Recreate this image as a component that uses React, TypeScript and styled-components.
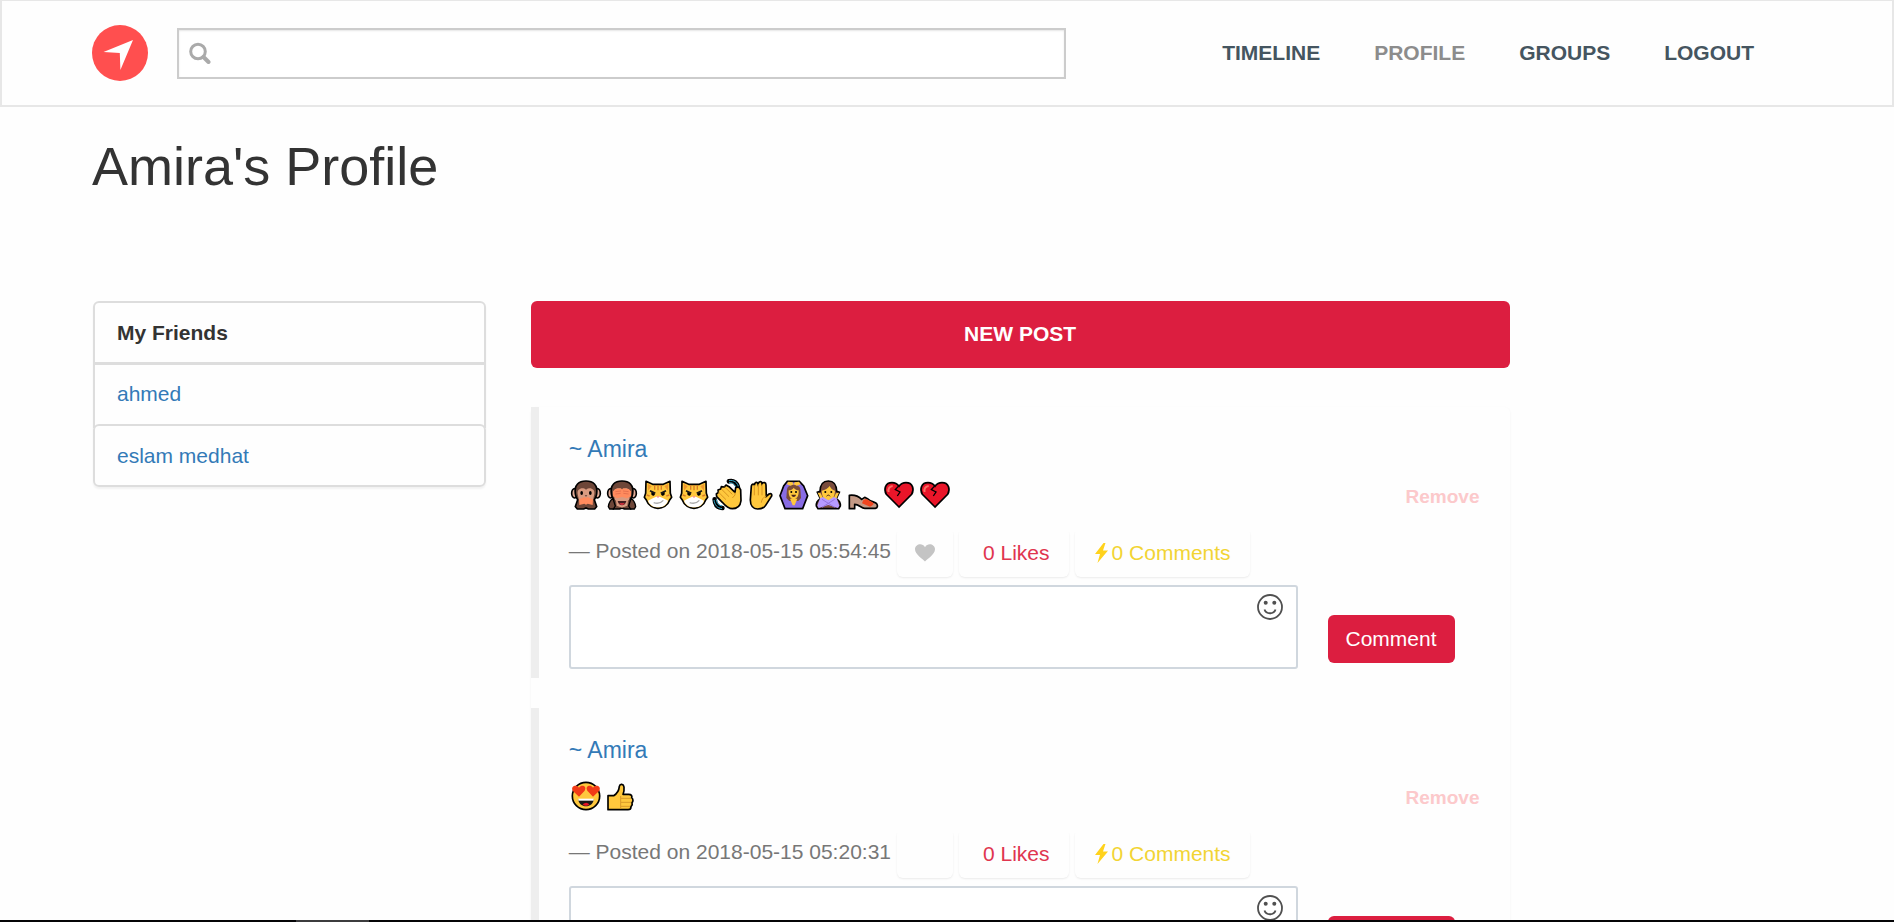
import React from "react";
import styled, { createGlobalStyle } from "styled-components";

const GlobalStyle = createGlobalStyle`
  *, *::before, *::after { box-sizing: border-box; }
  body {
    margin: 0;
    background: #fefefe;
    color: #333;
    font-family: "Liberation Sans", Arial, Helvetica, sans-serif;
    font-size: 21px;
    line-height: 30px;
  }
  a { color: #337ab7; text-decoration: none; }
  button { font: inherit; cursor: pointer; }
`;

const Page = styled.div`
  display: flex;
  flex-direction: column;
  height: 100vh;
`;

const Content = styled.div`
  flex: 1;
  min-height: 0;
  overflow: hidden;
`;

const Container = styled.div`
  max-width: 1710px;
  margin: 0 auto;
`;

const Header = styled.header`
  border: 2px solid #e7e7e7;
  border-top-width: 1px;
  background: #fefefe;
`;

const HeaderInner = styled(Container)`
  display: flex;
  align-items: center;
  height: 104px;
`;

const LogoLink = styled.a`
  display: block;
  height: 56px;
  margin-right: 29px;
`;

const SearchBox = styled.form`
  display: flex;
  align-items: center;
  width: 52%;
  height: 51px;
  padding-left: 10px;
  border: 2px solid #ccc;
  background: #fff;
  box-shadow: inset 0 1px 2px rgba(0, 0, 0, 0.1);
`;

const SearchInput = styled.input`
  flex: 1;
  min-width: 0;
  height: 100%;
  padding: 0 10px;
  border: 0;
  outline: 0;
  background: transparent;
  font: inherit;
`;

const Nav = styled.nav`
  display: flex;
  margin: 0 21px 0 auto;
`;

const NavLink = styled.a<{ $current?: boolean }>`
  padding: 0 27px;
  color: ${(p) => (p.$current ? "#8c8c8c" : "#455560")};
  font-weight: bold;
  text-transform: uppercase;
`;

const Title = styled.h1`
  margin: 29px 0 105px;
  font-size: 54px;
  font-weight: normal;
  line-height: 60px;
`;

const Columns = styled.main`
  display: grid;
  grid-template-columns: repeat(12, 1fr);
  column-gap: 45px;
  align-items: start;
`;

const FriendsPanel = styled.section`
  grid-column: span 3;
  margin-left: 1px;
  border-radius: 6px;
  box-shadow: 0 2px 2px rgba(0, 0, 0, 0.05);
  line-height: 29px;
`;

const FriendsHeading = styled.h2`
  margin: 0;
  padding: 15px 22px;
  border: 2px solid #ddd;
  border-bottom-width: 3px;
  border-radius: 6px 6px 0 0;
  font-size: 21px;
  line-height: 29px;
`;

const FriendList = styled.ul`
  margin: 0;
  padding: 0;
  list-style: none;
`;

const Friend = styled.li`
  padding: 14px 22px 20px;
  border: solid #ddd;
  border-width: 0 2px;

  &:last-child {
    margin-top: -4px;
    padding: 15px 22px;
    border-width: 2px;
    border-radius: 6px;
  }
`;

const Feed = styled.section`
  grid-column: span 7;
`;

const PrimaryButton = styled.button`
  border: 0;
  border-radius: 6px;
  background: #dc1e40;
  color: #fff;
`;

const NewPost = styled(PrimaryButton)`
  display: block;
  width: 100%;
  height: 67px;
  margin-bottom: 39px;
  padding: 0 0 2px;
  font-weight: bold;
  text-transform: uppercase;
`;

const Posts = styled.div`
  display: flex;
  flex-direction: column;
  gap: 30px;
  border-radius: 6px;
  box-shadow: 0 1px 3px rgba(0, 0, 0, 0.05);
`;

const PostCard = styled.article`
  padding: 26px 0 9px 30px;
  border-left: 8px solid #eee;
`;

const Author = styled.a`
  display: block;
  font-size: 23px;
  line-height: 32px;
`;

const PostBody = styled.div`
  display: flex;
  align-items: center;
  justify-content: space-between;
  height: 30px;
  margin: 15px 30px 18px 2px;
`;

const EmojiRow = styled.div`
  display: flex;
  gap: 6px;
`;

const RemoveButton = styled.button`
  padding: 3px 0 0;
  border: 0;
  background: none;
  color: #fcc9cb;
  font-size: 19px;
  font-weight: bold;
  line-height: 24px;
`;

const Meta = styled.div`
  display: flex;
  align-items: flex-start;
  gap: 6px;
  margin-bottom: 8px;
`;

const PostedOn = styled.small`
  color: #777;
  font-size: 21px;
  line-height: 45px;
`;

const Chip = styled.button<{ $color?: string }>`
  display: flex;
  align-items: center;
  gap: 4px;
  height: 49px;
  padding: 0 19px 0 20px;
  border: 0;
  border-radius: 6px;
  background: transparent;
  box-shadow: 0 1px 2px rgba(0, 0, 0, 0.08);
  clip-path: inset(4px -4px -4px -4px);
  color: ${(p) => p.$color ?? "#c4c4c4"};
`;

const LikeChip = styled(Chip)`
  justify-content: center;
  width: 56px;
  padding: 0;
`;

const LikesChip = styled(Chip)`
  padding-left: 24px;
`;

const CommentForm = styled.form`
  display: flex;
  align-items: flex-end;
  gap: 30px;
  padding-right: 55px;
`;

const CommentBox = styled.div`
  display: flex;
  flex: 1;
  align-items: flex-start;
  height: 84px;
  border: 2px solid #d0d7de;
  border-radius: 3px;
  background: #fff;
`;

const CommentInput = styled.textarea`
  flex: 1;
  height: 100%;
  padding: 8px 12px;
  border: 0;
  outline: 0;
  resize: none;
  background: transparent;
  font: inherit;
`;

const EmojiPicker = styled.button`
  height: 26px;
  margin: 7px 13px 0 0;
  padding: 0;
  border: 0;
  background: none;
`;

const SubmitComment = styled(PrimaryButton)`
  width: 127px;
  height: 48px;
  margin-bottom: 6px;
  padding: 0;
`;

const Taskbar = styled.footer`
  height: 2px;
  padding-left: 296px;
  background: #050507;
`;

const TaskbarActive = styled.div`
  width: 73px;
  height: 2px;
  background: #3c3c3e;
`;

const Logo = () => (
  <svg width="56" height="56" viewBox="0 0 56 56" aria-hidden="true">
    <circle cx="28" cy="28" r="28" fill="#ff4f4f" />
    <path d="M41 15 28.4 45 27.8 28 11.5 27z" fill="#fff" />
  </svg>
);

const SearchIcon = () => (
  <svg width="22" height="22" viewBox="0 0 22 22" fill="none" stroke="#aaa" aria-hidden="true">
    <circle cx="9" cy="9.500" r="7.3" strokeWidth="3" />
    <path d="m14.500 15 5 5" strokeWidth="4" strokeLinecap="round" />
  </svg>
);

const HeartIcon = () => (
  <svg width="20" height="18" viewBox="0 0 20 18" fill="currentColor" aria-hidden="true">
    <path d="M10 17.5C8 15 0 10.5 0 5.2 0 .6 7-2 10 3.2 13-2 20 .6 20 5.2 20 10.5 12 15 10 17.5z" />
  </svg>
);

const BoltIcon = () => (
  <svg width="13" height="20" viewBox="0 0 13 20" fill="#ffd21c" aria-hidden="true">
    <path d="M8.5 0 0 11h5L2.500 20 13 7.500H8L10.500 0z" />
  </svg>
);

const SmileIcon = () => (
  <svg width="26" height="26" viewBox="0 0 26 26" fill="none" stroke="#505050" strokeWidth="1.8" aria-hidden="true">
    <circle cx="13" cy="13" r="12" />
    <path d="M7.5 15.5c1.500 5 9.500 5 11 0" />
    <circle cx="8.7" cy="8.8" r="2" fill="#505050" stroke="none" />
    <circle cx="17.3" cy="8.8" r="2" fill="#505050" stroke="none" />
  </svg>
);

type EmojiName =
  | "Speak-no-evil monkey"
  | "See-no-evil monkey"
  | "Cat with wry smile"
  | "Clapping hands"
  | "Raised hand"
  | "Woman gesturing OK"
  | "Woman gesturing no"
  | "Sandal"
  | "Broken heart"
  | "Heart eyes"
  | "Thumbs up";

const monkeyHead = (
  <>
    <ellipse cx="11" cy="40" rx="9" ry="14" fill="#e0aa96" stroke="#000" strokeWidth="5" />
    <ellipse cx="79" cy="40" rx="9" ry="14" fill="#e0aa96" stroke="#000" strokeWidth="5" />
    <path
      d="M13 42C9 14 24 3 45 3s36 11 32 39c-1 8-4 12-7 17l7 21-6 7H52l-7-3-7 3H19l-6-7 7-21c-3-5-6-9-7-17z"
      fill="#6d4638"
      stroke="#000"
      strokeWidth="5"
    />
    <path d="M20 42c-3-15 14-22 25-13 11-9 28-2 25 13l-4 19H24z" fill="#d99b80" />
  </>
);

/* Each glyph is drawn three units to the pixel and is 90 units high. */
const glyphs: Record<EmojiName, { width: number; art: React.ReactNode }> = {
  "Speak-no-evil monkey": {
    width: 30,
    art: (
      <>
        {monkeyHead}
        <ellipse cx="32" cy="39" rx="4" ry="6" />
        <ellipse cx="58" cy="39" rx="4" ry="6" />
        <path d="M41 46h8l-4 4z" fill="#5c382e" />
        <path d="m24 58 17-7 4 3 4-3 17 7-1 17-15-4-5 3-5-3-15 4z" fill="#ff8b5e" />
      </>
    ),
  },
  "See-no-evil monkey": {
    width: 30,
    art: (
      <>
        {monkeyHead}
        <path d="M26 55h38l-3 22-16 6-16-6z" fill="#d99b80" />
        <path d="m18 34 7-7 17-2 3 4 3-4 17 2 7 7v15l-12 6-15-4-15 4-12-6z" fill="#ff8b5e" />
        <path d="m25 35 17-2M48 33l17 2M25 42l16-2M49 40l16 2" stroke="#db6547" strokeWidth="2" />
        <path d="M32 63h26c-3 17-23 17-26 0z" fill="#431e20" />
        <path d="M37 70h16c-4 6-12 6-16 0z" fill="#ed3544" />
        <path
          d="M4 80c2-13 8-21 14-24l7 22-6 9H8zM86 80c-2-13-8-21-14-24l-7 22 6 9h11z"
          fill="#6d4638"
          stroke="#000"
          strokeWidth="4"
        />
      </>
    ),
  },
  "Cat with wry smile": {
    width: 30,
    art: (
      <>
        <path
          d="m9 4 20 9h32l20-9 1 36 4 12-6 8c-6 18-22 25-35 25S16 78 10 60l-6-8 4-12z"
          fill="#ffc83d"
          stroke="#000"
          strokeWidth="5"
          strokeLinejoin="round"
        />
        <path d="m14 11 12 8-11 13zM76 11l-12 8 11 13z" fill="#ee982f" />
        <path d="M35 15v14M45 15v16M55 15v14M11 45l9 3M79 45l-9 3" stroke="#d87c27" strokeWidth="4" />
        <path d="M45 48 31 54 15 62c6 15 19 20 30 20s24-5 30-20L59 54z" fill="#fff" />
        <path d="m21 32 16 8M69 32l-16 8" stroke="#171717" strokeWidth="5" />
        <path d="M25 36v7c3 7 10 5 11-2zM65 36v7c-3 7-10 5-11-2z" />
        <path d="m40 49 5 5 5-5z" fill="#ff7d72" />
        <path d="M32 68c13 4 22 1 29-7" fill="none" stroke="#aaa" strokeWidth="4" />
      </>
    ),
  },
  "Clapping hands": {
    width: 28,
    art: (
      <>
        <path
          d="M42 4c14-4 25 5 27 20M-1 58c1 15 9 25 23 26"
          fill="none"
          stroke="#000"
          strokeWidth="14"
          strokeLinecap="round"
        />
        <path
          d="M42 2c15-3 27 6 29 22M42 8c11-1 19 6 21 16M-3 60c2 14 9 24 24 26M4 58c1 11 6 18 17 20"
          fill="none"
          stroke="#2fa5c6"
          strokeWidth="3"
        />
        <path
          d="m4 42 6-5-1-7 8-3 2-7 9 1 5-6 9 5 18 17 2-14 9-2 6 8 1 33c-2 17-13 24-26 24-11 0-20-7-30-19L5 50z"
          fill="#ffc83d"
          stroke="#000"
          strokeWidth="5"
          strokeLinejoin="round"
        />
        <path d="m10 36 23 23M19 27l23 23M29 21l23 22M60 37v8l-8 9" fill="none" stroke="#d99520" strokeWidth="3" />
      </>
    ),
  },
  "Raised hand": {
    width: 24,
    art: (
      <>
        <path
          d="M7 18c2-7 8-7 9-2 1-11 9-11 11-4 4-11 12-8 12-1 5-6 12-4 12 4l1 34 8-7c7-4 11 3 6 9L50 76c-6 10-16 11-24 11C12 87 4 76 4 60z"
          fill="#ffc83d"
          stroke="#000"
          strokeWidth="5"
        />
        <path
          d="M16 16v30M28 13v33M39 13v33M52 48c-10 4-14 11-15 20"
          fill="none"
          stroke="#d99520"
          strokeWidth="3"
        />
      </>
    ),
  },
  "Woman gesturing OK": {
    width: 30,
    art: (
      <>
        <path d="M25 4h36l13 14 12 29-15 39H18L3 47l11-29z" fill="#886ce4" stroke="#000" strokeWidth="5" />
        <path d="M24 28c2-18 38-18 40 0l2 26-8 9H31l-9-9z" fill="#7b4d38" />
        <path
          d="M29 31c8 0 13-4 15-8 3 4 8 8 15 8 1 19-6 26-15 26s-16-7-15-26zM33 56h22L47 76h-6z"
          fill="#ffc83d"
        />
        <path d="m28 5 13 2 3 6-9 4-12-4zM60 5 47 7l-3 6 9 4 12-4z" fill="#ffc83d" />
        <circle cx="37" cy="36" r="3" />
        <circle cx="51" cy="36" r="3" />
        <path d="M37 44h14c-2 9-12 9-14 0z" fill="#4a241e" />
      </>
    ),
  },
  "Woman gesturing no": {
    width: 27,
    art: (
      <>
        <path
          d="M15 34C16 12 23 3 40 3s24 9 25 31l8 3-9 19c8 5 13 13 12 22l-5 8H9l-5-8c-1-9 4-17 12-22L7 37z"
          fill="#794b3c"
          stroke="#000"
          strokeWidth="5"
        />
        <path d="M20 32c10-2 20-7 24-14 3 7 8 12 16 14-1 22-10 29-20 29S21 54 20 32z" fill="#ffc83d" />
        <path d="m8 38 9 2 8 16-7 5zM72 38l-9 2-8 16 7 5z" fill="#ffc83d" />
        <path d="m15 55 9-4 16 10 16-10 9 4 8 22-4 7-29-9-29 9-4-7z" fill="#b69aff" />
        <path d="m21 58 38 24M59 58 21 82" stroke="#9273dc" strokeWidth="3" />
        <circle cx="31" cy="36" r="3" />
        <circle cx="49" cy="36" r="3" />
        <path d="M35 49c2-5 8-5 10 0" fill="none" stroke="#4a241e" strokeWidth="3" />
      </>
    ),
  },
  Sandal: {
    width: 30,
    art: (
      <>
        <path
          d="M4 46c16-2 27 2 37 12l9-6 10 5c10 9 20 8 26 14 4 5 3 13-4 14H50c-10 0-17-12-30-12v13H4z"
          fill="#c49a86"
          stroke="#000"
          strokeWidth="5"
          strokeLinejoin="round"
        />
        <path d="M42 70c2-7 6-14 13-13l17 9 5 4c-1 5-5 8-11 10z" fill="#f04620" />
      </>
    ),
  },
  "Broken heart": {
    width: 30,
    art: (
      <>
        <path
          d="M45 81 7 43C-2 28 4 8 24 8c9 0 16 4 21 11C50 12 57 8 66 8c20 0 26 20 17 35z"
          fill="#e91529"
          stroke="#000"
          strokeWidth="5"
        />
        <path d="M14 36c-3-10 3-17 12-18" fill="none" stroke="#fa7066" strokeWidth="6" />
        <path d="m45 17-11 12 14 7-8 12" fill="none" stroke="#000" strokeWidth="4" />
      </>
    ),
  },
  "Heart eyes": {
    width: 30,
    art: (
      <>
        <circle cx="45" cy="45" r="41" fill="#ffc83d" stroke="#000" strokeWidth="5" />
        <path
          d="M24 47 5 29C-2 16 16 9 24 20c8-11 25-4 17 9zM66 47 49 29c-8-13 9-20 17-9 8-11 26-4 19 9z"
          fill="#f03a17"
        />
        <path d="M22 55h46c-1 28-45 28-46 0z" fill="#1a1716" />
        <path d="M22 53h46v6H22z" fill="#fff" />
        <path d="M35 70c7-6 14-6 20 0-6 6-14 6-20 0z" fill="#e71324" />
      </>
    ),
  },
  "Thumbs up": {
    width: 27,
    art: (
      <>
        <path
          d="M3 44h17c10-6 16-16 17-28 2-9 13-7 14 2 1 10 0 16-3 22h17c8 0 11 5 9 10 5 4 5 11 1 15 2 5 0 9-3 12 0 6-4 9-9 9H3z"
          fill="#ffc83d"
          stroke="#000"
          strokeWidth="5"
          strokeLinejoin="round"
        />
        <path d="M41 45v38M42 52h30M42 64h30M42 76h27" stroke="#d99a2a" strokeWidth="3" />
      </>
    ),
  },
};

const Emoji = ({ name }: { name: EmojiName }) => {
  const { width, art } = glyphs[name];
  return (
    <svg width={width} height="30" viewBox={`0 0 ${width * 3} 90`} role="img" aria-label={name} overflow="visible">
      {art}
    </svg>
  );
};

type Post = { id: number; author: string; posted: string; emojis: EmojiName[]; likable: boolean };

const posts: Post[] = [
  {
    id: 1,
    author: "Amira",
    posted: "2018-05-15 05:54:45",
    likable: true,
    emojis: [
      "Speak-no-evil monkey",
      "See-no-evil monkey",
      "Cat with wry smile",
      "Cat with wry smile",
      "Clapping hands",
      "Raised hand",
      "Woman gesturing OK",
      "Woman gesturing no",
      "Sandal",
      "Broken heart",
      "Broken heart",
    ],
  },
  { id: 2, author: "Amira", posted: "2018-05-15 05:20:31", likable: false, emojis: ["Heart eyes", "Thumbs up"] },
];

const PostItem = ({ post }: { post: Post }) => (
  <PostCard>
    <Author href="#">~ {post.author}</Author>
    <PostBody>
      <EmojiRow>
        {post.emojis.map((name, i) => (
          <Emoji key={i} name={name} />
        ))}
      </EmojiRow>
      <RemoveButton type="button">Remove</RemoveButton>
    </PostBody>
    <Meta>
      <PostedOn>— Posted on {post.posted}</PostedOn>
      <LikeChip type="button" aria-label="Like">
        {post.likable && <HeartIcon />}
      </LikeChip>
      <LikesChip type="button" $color="#e0354f">
        0 Likes
      </LikesChip>
      <Chip type="button" $color="#f2d433">
        <BoltIcon />0 Comments
      </Chip>
    </Meta>
    <CommentForm onSubmit={(e) => e.preventDefault()}>
      <CommentBox>
        <CommentInput aria-label="Write a comment" />
        <EmojiPicker type="button" aria-label="Insert emoji">
          <SmileIcon />
        </EmojiPicker>
      </CommentBox>
      <SubmitComment type="submit">Comment</SubmitComment>
    </CommentForm>
  </PostCard>
);

export default function App() {
  return (
    <Page>
      <GlobalStyle />
      <Content>
        <Header>
          <HeaderInner>
            <LogoLink href="#" aria-label="Home">
              <Logo />
            </LogoLink>
            <SearchBox role="search" onSubmit={(e) => e.preventDefault()}>
              <SearchIcon />
              <SearchInput type="text" aria-label="Search" />
            </SearchBox>
            <Nav>
              <NavLink href="#">Timeline</NavLink>
              <NavLink href="#" $current aria-current="page">
                Profile
              </NavLink>
              <NavLink href="#">Groups</NavLink>
              <NavLink href="#">Logout</NavLink>
            </Nav>
          </HeaderInner>
        </Header>
        <Container>
          <Title>Amira's Profile</Title>
          <Columns>
            <FriendsPanel>
              <FriendsHeading>My Friends</FriendsHeading>
              <FriendList>
                <Friend>
                  <a href="#">ahmed</a>
                </Friend>
                <Friend>
                  <a href="#">eslam medhat</a>
                </Friend>
              </FriendList>
            </FriendsPanel>
            <Feed>
              <NewPost type="button">New Post</NewPost>
              <Posts>
                {posts.map((post) => (
                  <PostItem key={post.id} post={post} />
                ))}
              </Posts>
            </Feed>
          </Columns>
        </Container>
      </Content>
      <Taskbar>
        <TaskbarActive />
      </Taskbar>
    </Page>
  );
}
